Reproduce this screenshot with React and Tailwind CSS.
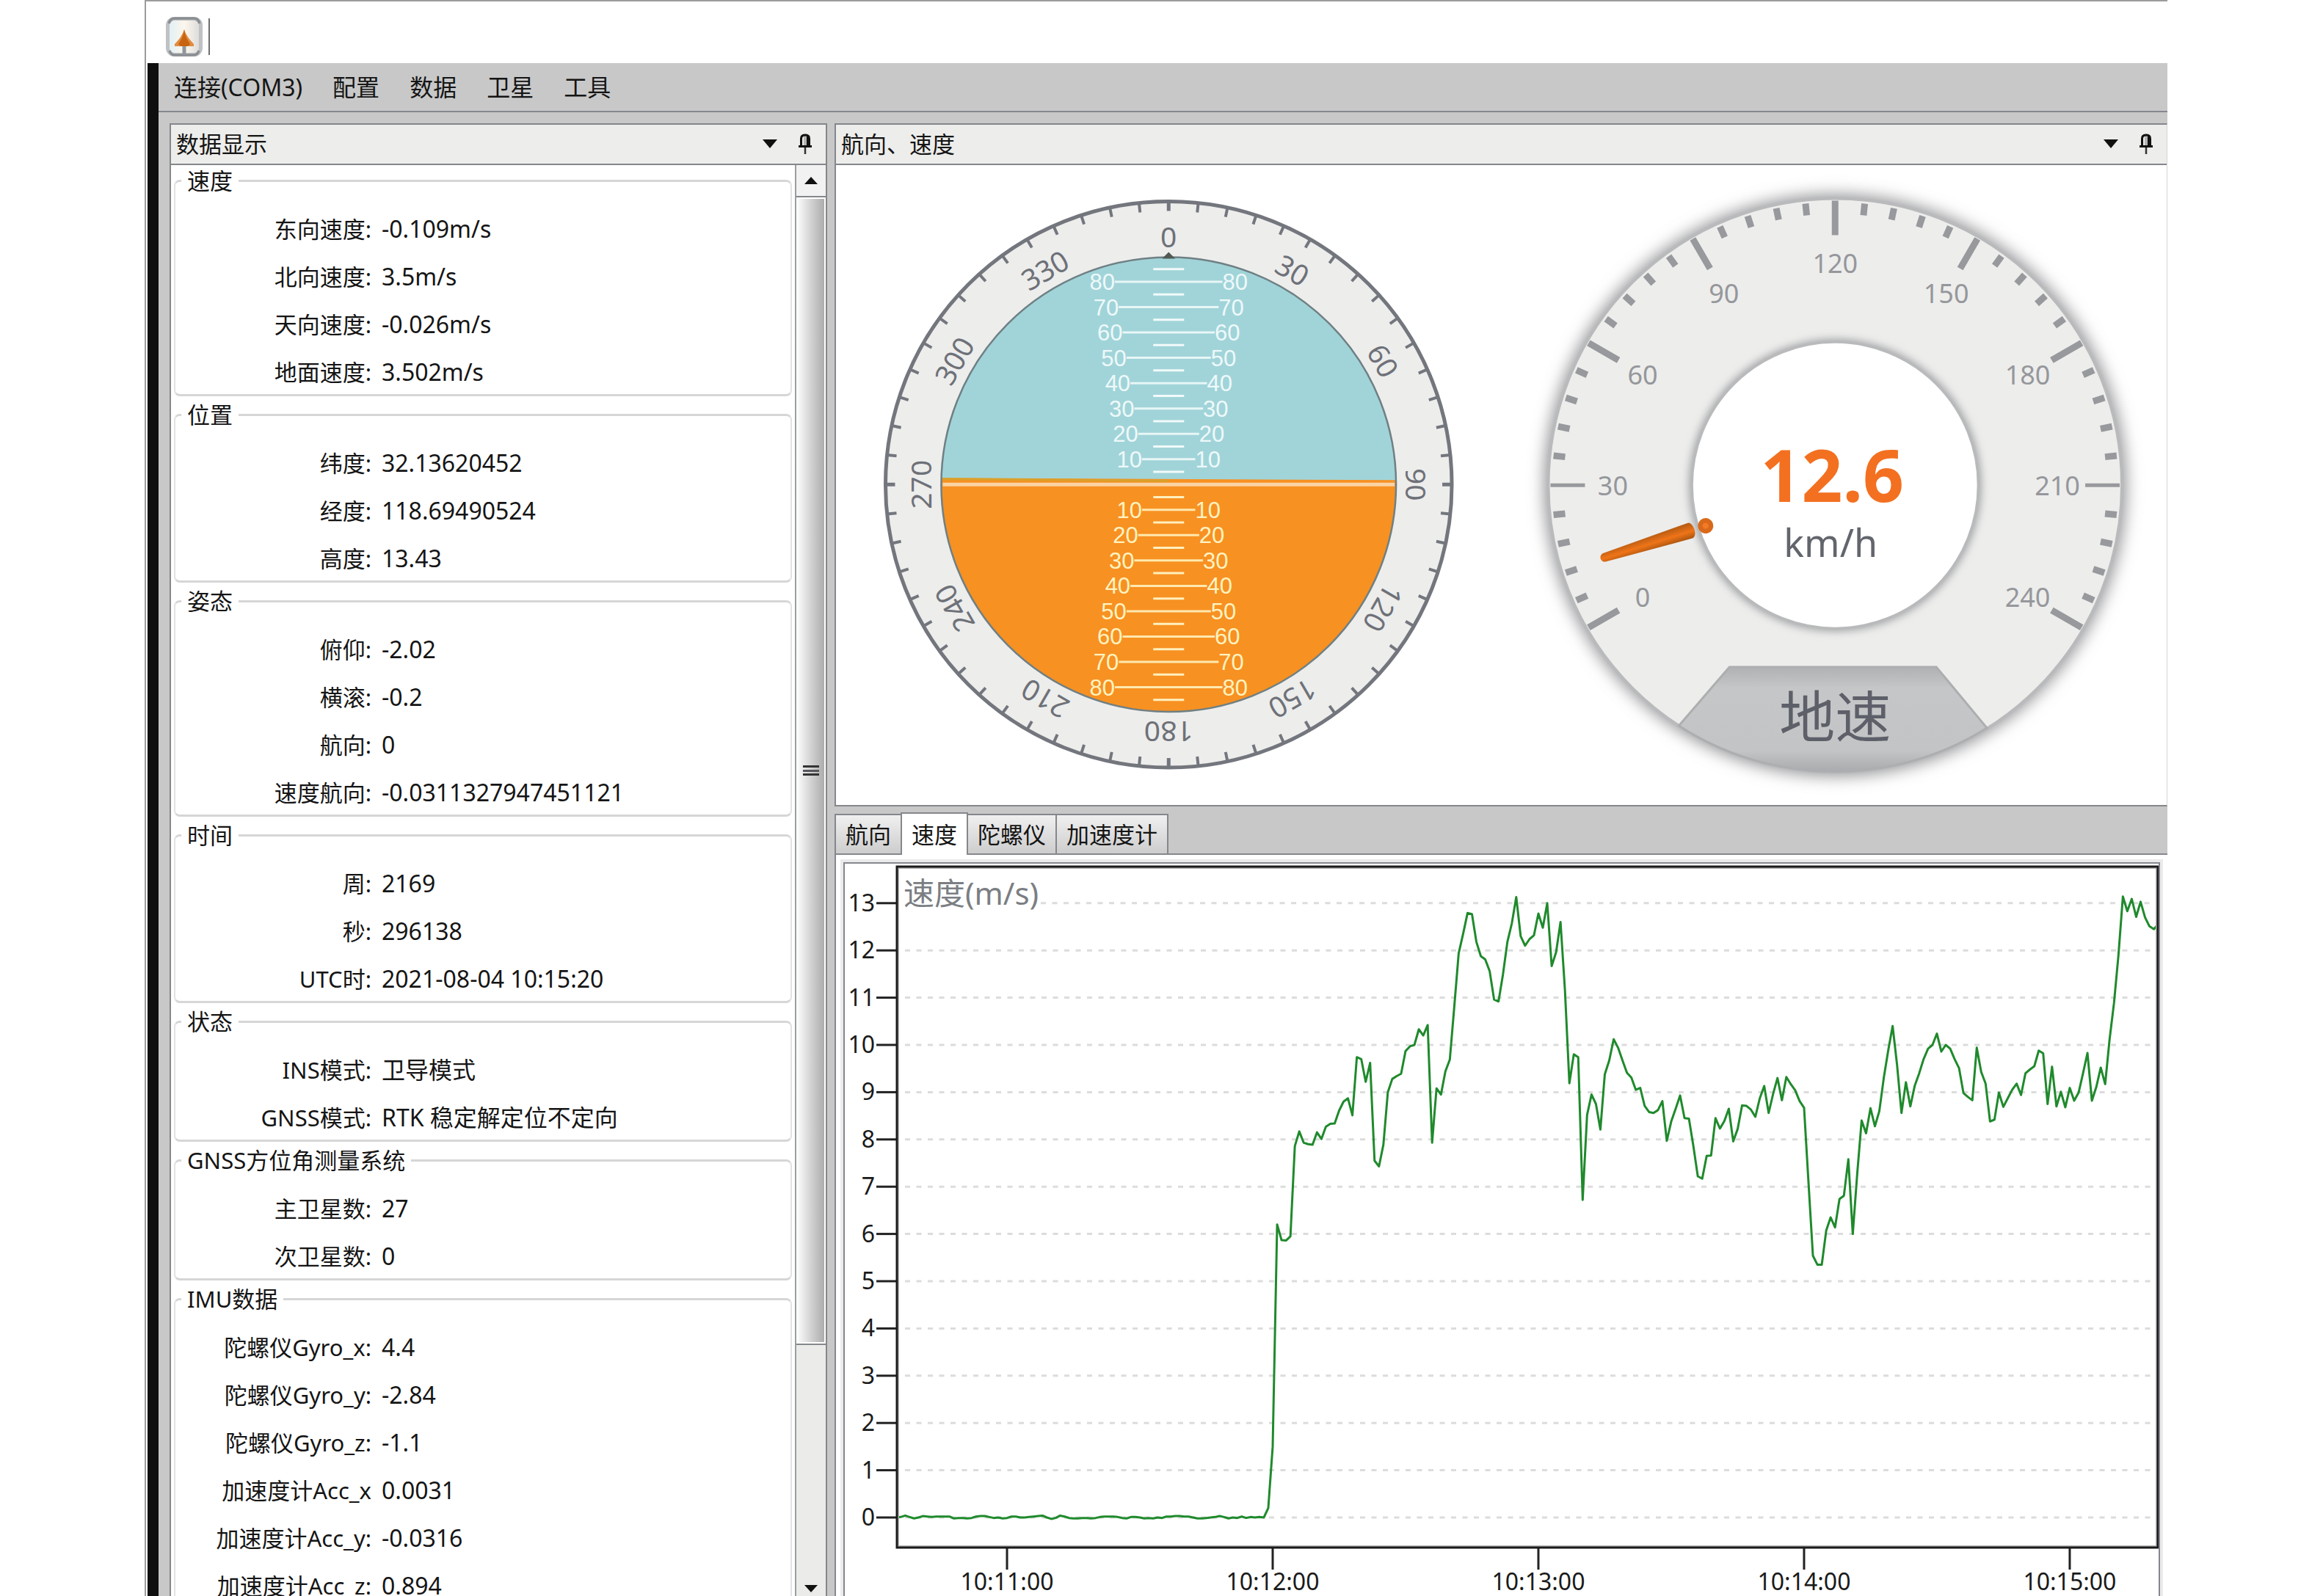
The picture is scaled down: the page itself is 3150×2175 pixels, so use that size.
import { useState } from "react";
import clsx from "clsx";

const GROUPS = [
  {
    title: "速度",
    rows: [
      ["东向速度:", "-0.109m/s"],
      ["北向速度:", "3.5m/s"],
      ["天向速度:", "-0.026m/s"],
      ["地面速度:", "3.502m/s"],
    ],
  },
  {
    title: "位置",
    rows: [
      ["纬度:", "32.13620452"],
      ["经度:", "118.69490524"],
      ["高度:", "13.43"],
    ],
  },
  {
    title: "姿态",
    rows: [
      ["俯仰:", "-2.02"],
      ["横滚:", "-0.2"],
      ["航向:", "0"],
      ["速度航向:", "-0.0311327947451121"],
    ],
  },
  {
    title: "时间",
    rows: [
      ["周:", "2169"],
      ["秒:", "296138"],
      ["UTC时:", "2021-08-04 10:15:20"],
    ],
  },
  {
    title: "状态",
    rows: [
      ["INS模式:", "卫导模式"],
      ["GNSS模式:", "RTK 稳定解定位不定向"],
    ],
  },
  {
    title: "GNSS方位角测量系统",
    rows: [
      ["主卫星数:", "27"],
      ["次卫星数:", "0"],
    ],
  },
  {
    title: "IMU数据",
    rows: [
      ["陀螺仪Gyro_x:", "4.4"],
      ["陀螺仪Gyro_y:", "-2.84"],
      ["陀螺仪Gyro_z:", "-1.1"],
      ["加速度计Acc_x", "0.0031"],
      ["加速度计Acc_y:", "-0.0316"],
      ["加速度计Acc_z:", "0.894"],
    ],
  },
];

const MENU = ["连接(COM3)", "配置", "数据", "卫星", "工具"];
const TABS = ["航向", "速度", "陀螺仪", "加速度计"];

// standing still: seconds before 10:12:00, then one sample per second after it
const IDLE = [
  0.0, 0.01, 0.04, 0.01, -0.02, 0.0, 0.03, 0.02, 0.01, 0.02, 0.02, 0.02, 0.02,
  -0.02, -0.01, -0.01, -0.02, -0.01, 0.02, 0.03, 0.03, 0.01, -0.01, 0.0, -0.02,
  -0.01, 0.02, 0.02, 0.0, 0.0, 0.01, 0.02, 0.03, 0.04, 0.0, -0.03, -0.01, 0.04,
  0.02, -0.01, -0.02, -0.02, -0.01, -0.01, -0.02, -0.01, 0.01, 0.02, 0.02,
  0.02, 0.01, -0.01, -0.02, 0.01, 0.01, 0.0, -0.02, -0.01, -0.02, 0.0, -0.01,
  0.02, 0.02, 0.03, 0.03, 0.02, 0.02, 0.0, -0.02, -0.02, -0.01, 0.0, 0.01,
  0.03, 0.01, -0.02, 0.0, -0.01, 0.02, -0.01, 0.01, 0.0, 0.01, 0.0, 0.2,
];
const MOVING = [
  1.5, 6.2, 5.87, 5.86, 5.95, 7.86, 8.17, 7.93, 7.9, 7.89, 8.15, 8.01, 8.27,
  8.33, 8.34, 8.61, 8.8, 8.87, 8.51, 9.74, 9.7, 9.22, 9.62, 7.55, 7.43, 7.89,
  9.0, 9.28, 9.34, 9.39, 9.87, 9.97, 10.0, 10.33, 10.2, 10.42, 7.93, 9.08,
  8.95, 9.44, 9.69, 10.8, 11.94, 12.35, 12.79, 12.77, 12.18, 11.88, 11.81,
  11.56, 10.96, 10.92, 11.49, 12.18, 12.57, 13.13, 12.3, 12.1, 12.24, 12.32,
  12.78, 12.48, 13.0, 11.67, 11.96, 12.6, 11.16, 9.19, 9.8, 9.74, 6.72, 8.52,
  8.95, 8.75, 8.21, 9.38, 9.67, 10.12, 9.94, 9.67, 9.41, 9.31, 9.05, 9.09,
  8.71, 8.58, 8.56, 8.62, 8.81, 7.97, 8.38, 8.65, 8.93, 8.45, 8.44, 7.86,
  7.22, 7.17, 7.65, 7.66, 8.45, 8.23, 8.39, 8.65, 7.96, 8.22, 8.72, 8.71,
  8.63, 8.48, 8.87, 9.13, 8.56, 8.96, 9.3, 8.83, 9.32, 9.17, 9.04, 8.81, 8.67,
  7.09, 5.54, 5.35, 5.35, 6.07, 6.35, 6.14, 6.74, 6.81, 7.58, 6.0, 7.27, 8.4,
  8.13, 8.66, 8.28, 8.6, 9.3, 9.88, 10.4, 9.58, 8.56, 9.21, 8.7, 9.14, 9.4,
  9.7, 9.92, 10.0, 10.24, 9.86, 10.0, 9.92, 9.7, 9.51, 8.98, 8.9, 8.83, 9.94,
  9.43, 9.18, 8.38, 8.42, 8.99, 8.69, 8.87, 9.05, 9.18, 8.94, 9.4, 9.48, 9.55,
  9.88, 9.82, 8.75, 9.54, 8.7, 9.01, 8.68, 9.09, 8.82, 8.99, 9.4, 9.83, 8.82,
  9.11, 9.52, 9.17, 10.12, 10.89, 11.9, 13.14, 12.83, 13.09, 12.71, 13.03,
  12.7, 12.51, 12.45, 12.56,
];

function range(n, start = 0) {
  return Array.from({ length: n }, (_, i) => i + start);
}

function AppIcon() {
  return (
    <svg viewBox="0 0 50 54" className="h-[54px] w-[50px]" aria-hidden="true">
      <defs>
        <linearGradient id="iconBg" x1="0" y1="0" x2="1" y2="0">
          <stop offset="0" stopColor="#dfeff6" />
          <stop offset="0.5" stopColor="#fdf6ec" />
          <stop offset="1" stopColor="#dadada" />
        </linearGradient>
      </defs>
      <rect x="2.500" y="2.500" width="45" height="49" rx="9" fill="url(#iconBg)" stroke="#bfc1c3" strokeWidth="5" />
      <path d="M4 9q2-7 8-7h26q6 0 8 7M5 46q2 6 7 6h26q5 0 7-6" fill="none" stroke="#8b8e93" strokeWidth="3.500" />
      <path d="M25 40v10" stroke="#8f979c" strokeWidth="5" />
      <path d="M25 17c2 7 7 14 13 20v3H12v-3c6-6 11-13 13-20z" fill="#e08c42" />
      <path d="M25 17c1 8 4 14 8 20l-3 3H20l-3-3c4-6 7-12 8-20z" fill="#c8640f" />
    </svg>
  );
}

function PanelHeader({ title }) {
  return (
    <header className="flex h-[55px] shrink-0 items-center gap-5 border-b-2 border-[#84878c] bg-[#ededeb] pr-[14px] pb-[2px] pl-[7px]">
      <h2 className="flex-1 text-[31px] leading-10">{title}</h2>
      <button type="button" aria-label="Menu" className="flex h-8 w-7 items-center justify-center">
        <svg viewBox="0 0 20 12" className="h-3 w-5">
          <path d="M0 0h20L10 12z" fill="#111" />
        </svg>
      </button>
      <button type="button" aria-label="Pin" className="flex h-8 w-7 items-center justify-center">
        <svg viewBox="0 0 20 30" className="h-[30px] w-5" fill="none" stroke="#111">
          <path d="M10 4v14" stroke="#b5b5b5" strokeWidth="4" />
          <path d="M4.500 18V8q0-5 5-5h1q5 0 5 5v10" strokeWidth="3" />
          <path d="M13.500 5v13" strokeWidth="3" />
          <path d="M1 18.500h18" strokeWidth="3" />
          <path d="M10 20v9" stroke="#333" strokeWidth="2.500" />
        </svg>
      </button>
    </header>
  );
}

function DataGroup({ title, rows }) {
  return (
    <fieldset className="rounded-lg border-x-2 border-y-3 border-x-[#e2e2e2] border-y-[#d6d6d6] pt-[26px] pb-[10px]">
      <legend className="ml-2 px-2 text-[31px] leading-10">{title}</legend>
      <dl className="flex flex-col gap-[25px] leading-10">
        {rows.map(([label, value]) => (
          <div key={label} className="flex gap-[14px] whitespace-nowrap">
            <dt className="w-[267px] shrink-0 text-right text-[31px]">{label}</dt>
            <dd className="text-[32px]">{value}</dd>
          </div>
        ))}
      </dl>
    </fieldset>
  );
}

function ScrollBar() {
  return (
    <div className="flex w-[42px] shrink-0 flex-col border-l-2 border-[#9b9da1] bg-[#ebebe9]">
      <button type="button" aria-label="Scroll up" className="flex h-11 items-center justify-center border-b-2 border-[#84878c] bg-[#f2f2f2]">
        <svg viewBox="0 0 18 10" className="h-[10px] w-[18px]">
          <path d="M0 10h18L9 0z" fill="#111" />
        </svg>
      </button>
      <div className="flex h-[1564px] shrink-0 items-center justify-center border-b-2 border-[#84878c] bg-linear-to-r from-white via-[#d2d2d2] to-[#a8a8a8] ring-2 ring-white ring-inset">
        <div className="flex h-[14px] w-[22px] flex-col justify-between">
          <span className="h-[3px] bg-[#333]" />
          <span className="h-[3px] bg-[#55575d]" />
          <span className="h-[3px] bg-[#333]" />
        </div>
      </div>
      <div className="flex-1" />
      <button type="button" aria-label="Scroll down" className="flex h-5 shrink-0 items-center justify-center">
        <svg viewBox="0 0 18 10" className="h-[10px] w-[18px]">
          <path d="M0 0h18L9 10z" fill="#111" />
        </svg>
      </button>
    </div>
  );
}

function HeadingGauge() {
  const pitch = 34.55;
  return (
    <svg viewBox="0 0 907 872" className="w-full" role="img">
      <defs>
        <clipPath id="horizon">
          <circle r="310" />
        </clipPath>
      </defs>
      <g transform="translate(453.500 435.500)">
        <circle r="386" fill="#ededec" stroke="#73767d" strokeWidth="5" />
        {range(60).map((i) => (
          <path
            key={i}
            d="M0-386v13"
            stroke="#73767d"
            strokeWidth={i % 15 === 0 ? 5 : 4}
            transform={`rotate(${i * 6})`}
          />
        ))}
        {range(12).map((i) => (
          <text
            key={i}
            y="-323"
            textAnchor="middle"
            transform={`rotate(${i * 30})`}
            className="fill-[#6e7178] text-[39px]"
          >
            {i * 30}
          </text>
        ))}

        {/* sky and ground */}
        <g clipPath="url(#horizon)">
          <rect x="-310" y="-310" width="620" height="620" fill="#a1d4d9" />
          <path d="M-310-9L310-6V310H-310z" fill="#f79122" />
          <path d="M-310-7.500L0-5" stroke="#d9a12a" strokeWidth="3" />
        </g>
        <circle r="310" fill="none" stroke="#6f8084" strokeWidth="2.500" />
        <path d="M-308 0H308" stroke="#fbd3a4" strokeWidth="5" />
        <path d="M-9-308L0-317L9-308z" fill="#4f5b52" />

        {range(9).map((i) => (
          <g key={i} strokeWidth="3">
            <path d="M-21 0h42" transform={`translate(0 ${-(i + 0.5) * pitch})`} stroke="#f2fafa" />
            <path d="M-21 0h42" transform={`translate(0 ${(i + 0.5) * pitch})`} stroke="#fff0be" />
          </g>
        ))}
        {[-1, 1].map((side) =>
          range(8, 1).map((i) => {
            const half = 31 + i * 5.3;
            const color = side < 0 ? "fill-[#eef9f9]" : "fill-[#fff3c0]";
            return (
              <g key={side * i} transform={`translate(0 ${side * i * pitch})`}>
                <path
                  d={`M${-half} 0H${half}`}
                  stroke={side < 0 ? "#e8f6f6" : "#ffe9ae"}
                  strokeWidth="3"
                />
                <text
                  x={-half}
                  y="11"
                  textAnchor="end"
                  className={clsx("font-['Liberation_Sans',sans-serif] text-[31px]", color)}
                >
                  {i * 10}
                </text>
                <text
                  x={half}
                  y="11"
                  className={clsx("font-['Liberation_Sans',sans-serif] text-[31px]", color)}
                >
                  {i * 10}
                </text>
              </g>
            );
          })
        )}
      </g>
    </svg>
  );
}

function SpeedGauge({ speed }) {
  return (
    <svg viewBox="0 0 907 872" className="w-full" role="img">
      <defs>
        <filter id="soft" x="-20%" y="-20%" width="140%" height="140%">
          <feGaussianBlur stdDeviation="11" />
        </filter>
        <filter id="softInner" x="-20%" y="-20%" width="140%" height="140%">
          <feGaussianBlur stdDeviation="6" />
        </filter>
        <linearGradient id="plate" x1="0" y1="0" x2="0" y2="1">
          <stop offset="0" stopColor="#b0b1b2" />
          <stop offset="0.2" stopColor="#c5c6c7" />
          <stop offset="0.8" stopColor="#c3c4c5" />
          <stop offset="1" stopColor="#a9aaad" />
        </linearGradient>
        <linearGradient id="needle" x1="0" y1="0" x2="1" y2="0">
          <stop offset="0" stopColor="#a9550f" />
          <stop offset="0.45" stopColor="#ef7418" />
          <stop offset="1" stopColor="#b25a12" />
        </linearGradient>
      </defs>
      <g transform="translate(454.500 436.500)">
        <circle r="396" fill="#8f9093" filter="url(#soft)" />
        <circle r="391" fill="#ededec" stroke="#b9babc" strokeWidth="4" />

        {/* name plate */}
        <path
          d="M-144 248H138L207 331A391 391 0 0 1-213 328z"
          fill="url(#plate)"
          stroke="#adaeb0"
          strokeWidth="3"
        />
        <text y="344" textAnchor="middle" className="fill-[#5d6069] text-[76px]">
          地速
        </text>

        {range(41).map((i) => {
          const major = i % 5 === 0;
          const level = i === 5 || i === 35;
          return (
            <path
              key={i}
              d={major ? "M0-388v47" : "M0-386v16"}
              stroke="#97999d"
              strokeWidth={level ? 5 : 9}
              transform={`rotate(${i * 6 - 120})`}
            />
          );
        })}
        {range(9).map((i) => {
          const a = ((i * 30 - 120) * Math.PI) / 180;
          return (
            <text
              key={i}
              x={303 * Math.sin(a)}
              y={-303 * Math.cos(a) + 14}
              textAnchor="middle"
              className="fill-[#95979b] text-[36px]"
            >
              {i * 30}
            </text>
          );
        })}

        <circle r="199" fill="#9fa0a3" filter="url(#softInner)" />
        <circle r="195" fill="#fff" stroke="#b9babc" strokeWidth="3" />
        <g transform={`rotate(${speed - 120})`}>
          <path d="M-6-329a6 6 0 0 1 12 0L11-207a11 6 0 0 1-22 0z" fill="url(#needle)" />
          <circle cy="-185" r="10.500" fill="#d9691a" />
          <circle cy="-185" r="4" fill="#f37a26" />
        </g>
        <text x="-4" y="23" textAnchor="middle" className="fill-[#f37021] text-[98px] font-bold">
          {speed}
        </text>
        <text x="-6" y="98" textAnchor="middle" className="fill-[#62656c] text-[52px]">
          km/h
        </text>
      </g>
    </svg>
  );
}

function SpeedChart() {
  const x = (t) => 583 + t * 6.033;
  const y = (v) => 891 - v * 64.4;
  const points = [
    ...IDLE.map((v, i) => [x(i - IDLE.length), y(v)]),
    ...MOVING.map((v, i) => [x(i), y(v)]),
  ];

  return (
    <svg viewBox="0 0 1790 998" className="w-full" role="img">
      {range(14).map((v) => (
        <g key={v}>
          <path
            d={`M${v === 13 ? 267 : 82} ${y(v)}H1786`}
            stroke="#dcdcdc"
            strokeWidth="3"
            strokeDasharray="7 8.500"
          />
          <path d={`M43 ${y(v)}h28`} stroke="#222" strokeWidth="3" />
          <text x="41" y={y(v) + 11} textAnchor="end" className="fill-[#1a1a1a] text-[32px]">
            {v}
          </text>
        </g>
      ))}
      {range(5).map((i) => (
        <g key={i}>
          <path d={`M${x((i - 1) * 60)} 933v29`} stroke="#222" strokeWidth="3" />
          <text x={x((i - 1) * 60)} y="990" textAnchor="middle" className="fill-[#1a1a1a] text-[32px]">
            {`10:1${i + 1}:00`}
          </text>
        </g>
      ))}
      <polyline
        points={points.map((p) => p.join(",")).join(" ")}
        fill="none"
        stroke="#1f8a2c"
        strokeWidth="3"
        strokeLinejoin="round"
      />
      <rect x="73" y="6" width="1714" height="924" fill="none" stroke="#b5b5b5" strokeWidth="2" />
      <rect x="71" y="4" width="1718" height="928" fill="none" stroke="#1a1a1a" strokeWidth="3" />
      <text x="80" y="56" className="fill-[#7b7e83] text-[42px]">
        速度(m/s)
      </text>
    </svg>
  );
}

export default function App() {
  const [tab, setTab] = useState("速度");

  return (
    <div className="h-screen overflow-hidden bg-white px-[197px] font-['Noto_Sans','Noto_Sans_CJK_SC',sans-serif] text-[#151515]">
      <div className="flex h-full flex-col border-t-2 border-l-2 border-[#9c9c9c]">
        <div className="flex h-[84px] shrink-0 items-center gap-2 pt-3 pl-[27px]">
          <AppIcon />
          <span className="h-[50px] w-[2px] bg-[#6f6f6f]" />
        </div>

        <div className="flex min-h-0 flex-1 pl-[2px]">
          <div className="w-[15px] shrink-0 bg-[#0f0f0f]" />
          <div className="flex min-w-0 flex-1 flex-col bg-[#c8c8c8]">
            <nav className="flex h-[67px] shrink-0 items-center gap-[41px] border-b-2 border-[#85888d] pl-[21px] text-[32px] leading-10">
              {MENU.map((item) => (
                <button key={item} type="button">
                  {item}
                </button>
              ))}
            </nav>

            <div className="flex min-h-0 flex-1 gap-[10px] pt-[15px] pl-[15px]">
              <section className="flex w-[896px] shrink-0 flex-col border-2 border-b-0 border-[#84878c] bg-white">
                <PanelHeader title="数据显示" />
                <div className="flex min-h-0 flex-1">
                  <div className="flex min-w-0 flex-1 flex-col gap-[5px] overflow-hidden px-1 pt-px">
                    {GROUPS.map((group) => (
                      <DataGroup key={group.title} {...group} />
                    ))}
                  </div>
                  <ScrollBar />
                </div>
              </section>

              <div className="flex min-w-0 flex-1 flex-col">
                <section className="shrink-0 border-2 border-r border-[#84878c] border-r-[#d5d5d5] bg-white">
                  <PanelHeader title="航向、速度" />
                  <div className="grid grid-cols-2">
                    <HeadingGauge />
                    <SpeedGauge speed={12.6} />
                  </div>
                </section>

                <div role="tablist" className="flex h-[66px] shrink-0 items-end border-b-2 border-[#84878c]">
                  {TABS.map((name, i) => (
                    <button
                      key={name}
                      type="button"
                      role="tab"
                      aria-selected={tab === name}
                      onClick={() => setTab(name)}
                      className={clsx(
                        "border-2 border-b-0 border-[#84878c] px-[13px] text-[31px] leading-10",
                        i > 0 && "-ml-[2px]",
                        tab === name
                          ? "-mb-[2px] h-[58px] bg-white"
                          : "h-[54px] bg-linear-to-b from-[#f0f0f0] to-[#cdcdcd]"
                      )}
                    >
                      {name}
                    </button>
                  ))}
                </div>
                <section role="tabpanel" className="min-h-0 flex-1 overflow-hidden border-l-2 border-[#84878c] bg-white px-[10px] pt-[10px]">
                  <div className="border-2 border-[#84878c] bg-white ring-4 ring-[#ebebeb]">
                    <SpeedChart />
                  </div>
                </section>
              </div>
            </div>
          </div>
        </div>
      </div>
    </div>
  );
}
